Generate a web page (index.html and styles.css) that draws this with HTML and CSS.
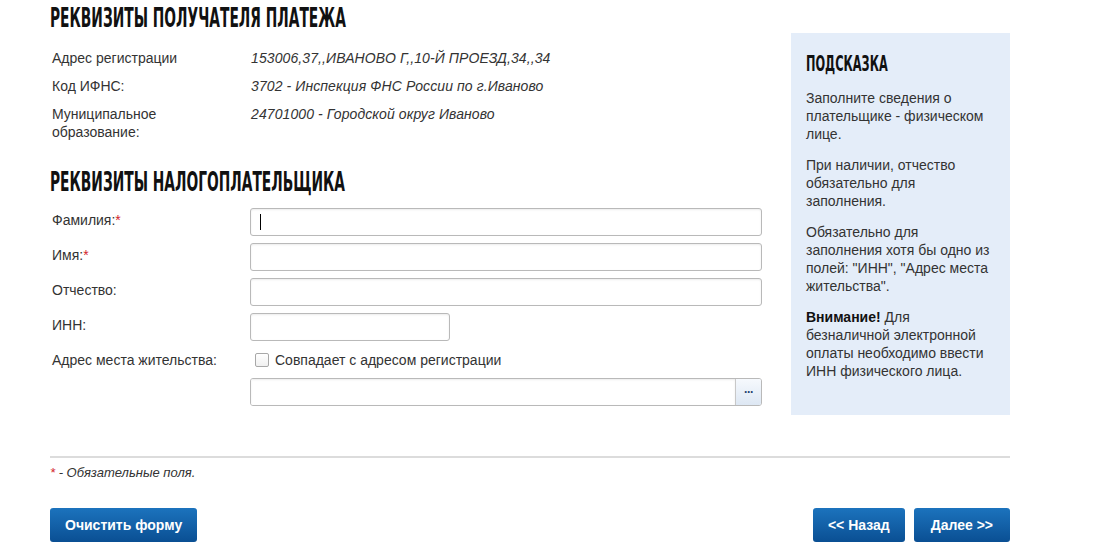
FILE: index.html
```html
<!DOCTYPE html>
<html lang="ru">
<head>
  <meta charset="UTF-8">
  <title>Реквизиты платежа</title>
  <link rel="stylesheet" href="styles.css">
</head>
<body>
  <div class="page">
    <div class="columns">
      <div class="main">
        <h2 class="title"><span>Реквизиты получателя платежа</span></h2>
        <dl class="info">
          <div class="info-row">
            <dt>Адрес регистрации</dt>
            <dd>153006,37,,ИВАНОВО Г,,10-Й ПРОЕЗД,34,,34</dd>
          </div>
          <div class="info-row">
            <dt>Код ИФНС:</dt>
            <dd>3702 - Инспекция ФНС России по г.Иваново</dd>
          </div>
          <div class="info-row">
            <dt>Муниципальное образование:</dt>
            <dd>24701000 - Городской округ Иваново</dd>
          </div>
        </dl>

        <h2 class="title title-second"><span>Реквизиты налогоплательщика</span></h2>
        <div class="form">
          <div class="form-row">
            <label class="form-label">Фамилия:<span class="req">*</span></label>
            <div class="field"><input type="text" class="input"><span class="caret"></span></div>
          </div>
          <div class="form-row">
            <label class="form-label">Имя:<span class="req">*</span></label>
            <div class="field"><input type="text" class="input"></div>
          </div>
          <div class="form-row">
            <label class="form-label">Отчество:</label>
            <div class="field"><input type="text" class="input"></div>
          </div>
          <div class="form-row">
            <label class="form-label">ИНН:</label>
            <div class="field"><input type="text" class="input input-short"></div>
          </div>
          <div class="form-row">
            <label class="form-label">Адрес места жительства:</label>
            <div class="field">
              <label class="check"><span class="check-box"></span>Совпадает с адресом регистрации</label>
              <div class="address">
                <input type="text" class="input address-input">
                <button class="pick">&middot;&middot;&middot;</button>
              </div>
            </div>
          </div>
        </div>
      </div>

      <aside class="hint">
        <h3 class="hint-title"><span>Подсказка</span></h3>
        <p>Заполните сведения о плательщике - физическом лице.</p>
        <p>При наличии, отчество обязательно для заполнения.</p>
        <p>Обязательно для заполнения хотя бы одно из полей: "ИНН", "Адрес места жительства".</p>
        <p><b>Внимание!</b> Для безналичной электронной оплаты необходимо ввести ИНН физического лица.</p>
      </aside>
    </div>

    <div class="footer">
      <p class="note"><span class="req">*</span> - Обязательные поля.</p>
      <div class="actions">
        <button class="btn">Очистить форму</button>
        <div class="nav">
          <button class="btn">&lt;&lt; Назад</button>
          <button class="btn btn-next">Далее &gt;&gt;</button>
        </div>
      </div>
    </div>
  </div>
</body>
</html>
```

FILE: styles.css
```css
body {
  margin: 0;
  font-family: Arial, "Liberation Sans", sans-serif;
  font-size: 14px;
  color: #333;
  background: #fff;
}
.page {
  width: 960px;
  margin-left: 50px;
}
.columns {
  display: flex;
  justify-content: space-between;
}
.main {
  width: 712px;
}

/* condensed headings */
.title {
  margin: 0;
  height: 34px;
  font-family: "Liberation Sans Narrow", "DejaVu Sans Condensed", sans-serif;
  font-weight: bold;
  font-size: 26px;
  line-height: 34px;
  color: #111;
  text-transform: uppercase;
  white-space: nowrap;
}
.title span {
  display: inline-block;
  transform: scaleX(0.59);
  transform-origin: left center;
  margin-top: 1px;
}
.title-second {
  margin-top: 23px;
}

.info {
  margin: 15px 0 0;
}
.info-row {
  display: flex;
  margin-bottom: 10px;
  line-height: 18px;
}
.info dt {
  width: 201px;
  padding-left: 2px;
  box-sizing: border-box;
}
.info-row:last-child dt {
  width: 130px;
  margin-right: 71px;
}
.info dd {
  margin: 0;
  font-style: italic;
  letter-spacing: 0.1px;
}

.form {
  margin-top: 10px;
}
.form-row {
  display: flex;
  margin-bottom: 7px;
}
.form-label {
  width: 200px;
  padding: 4px 0 0 2px;
  box-sizing: border-box;
  line-height: 16px;
}
.req {
  color: #d3242c;
}
.field {
  flex: 1;
  position: relative;
}
.input {
  display: block;
  width: 512px;
  height: 28px;
  box-sizing: border-box;
  border: 1px solid #b9b9b9;
  border-radius: 3px;
  box-shadow: inset 0 1px 2px rgba(0, 0, 0, 0.08);
  background: #fff;
  font: 14px Arial, "Liberation Sans", sans-serif;
  padding: 0 8px;
}
.input-short {
  width: 200px;
}
.caret {
  position: absolute;
  left: 10px;
  top: 6px;
  width: 1px;
  height: 16px;
  background: #000;
}

.check {
  display: flex;
  align-items: center;
  height: 20px;
  margin-top: 2px;
  line-height: 20px;
  padding-left: 5px;
}
.check-box {
  width: 12px;
  height: 12px;
  border: 1px solid #a8a8a8;
  border-radius: 2px;
  background: linear-gradient(#fff, #f0f0f0);
  margin-right: 6px;
}
.address {
  display: flex;
  width: 512px;
  margin-top: 8px;
  border: 1px solid #b9b9b9;
  border-radius: 3px;
  box-sizing: border-box;
  overflow: hidden;
}
.address-input {
  flex: 1;
  width: auto;
  height: 26px;
  border: none;
  border-radius: 0;
}
.pick {
  width: 26px;
  height: 26px;
  border: none;
  border-left: 1px solid #c8c8c8;
  background: linear-gradient(#f6f9fd, #dde7f3);
  color: #1c3f6e;
  font-weight: bold;
  font-size: 12px;
  letter-spacing: -1px;
  padding: 0;
}

.hint {
  width: 219px;
  height: 382px;
  margin-top: 33px;
  padding: 19px 15px 0;
  box-sizing: border-box;
  background: #e4edf9;
  line-height: 18px;
  color: #333;
}
.hint-title {
  margin: 0 0 13px;
  height: 24px;
  font-family: "Liberation Sans Narrow", "DejaVu Sans Condensed", sans-serif;
  font-weight: bold;
  font-size: 21px;
  line-height: 24px;
  color: #111;
  text-transform: uppercase;
}
.hint-title span {
  display: inline-block;
  transform: scaleX(0.6);
  transform-origin: left center;
}
.hint p {
  margin: 0 0 13px;
}
.hint b {
  color: #111;
}

.footer {
  margin-top: 41px;
  border-top: 2px solid #dcdcdc;
}
.note {
  margin: 7px 0 0;
  font-size: 13px;
  font-style: italic;
  line-height: 16px;
}
.actions {
  display: flex;
  justify-content: space-between;
  margin-top: 27px;
}
.nav {
  display: flex;
  gap: 9px;
}
.btn {
  height: 34px;
  padding: 0 15px;
  border: none;
  border-radius: 3px;
  background: linear-gradient(#1c73bd, #0a4f93);
  color: #fff;
  font: bold 14px Arial, "Liberation Sans", sans-serif;
  cursor: pointer;
}
.btn-next {
  padding: 0 17px;
}
.btn:hover {
  background: #0a4f93;
}
```
